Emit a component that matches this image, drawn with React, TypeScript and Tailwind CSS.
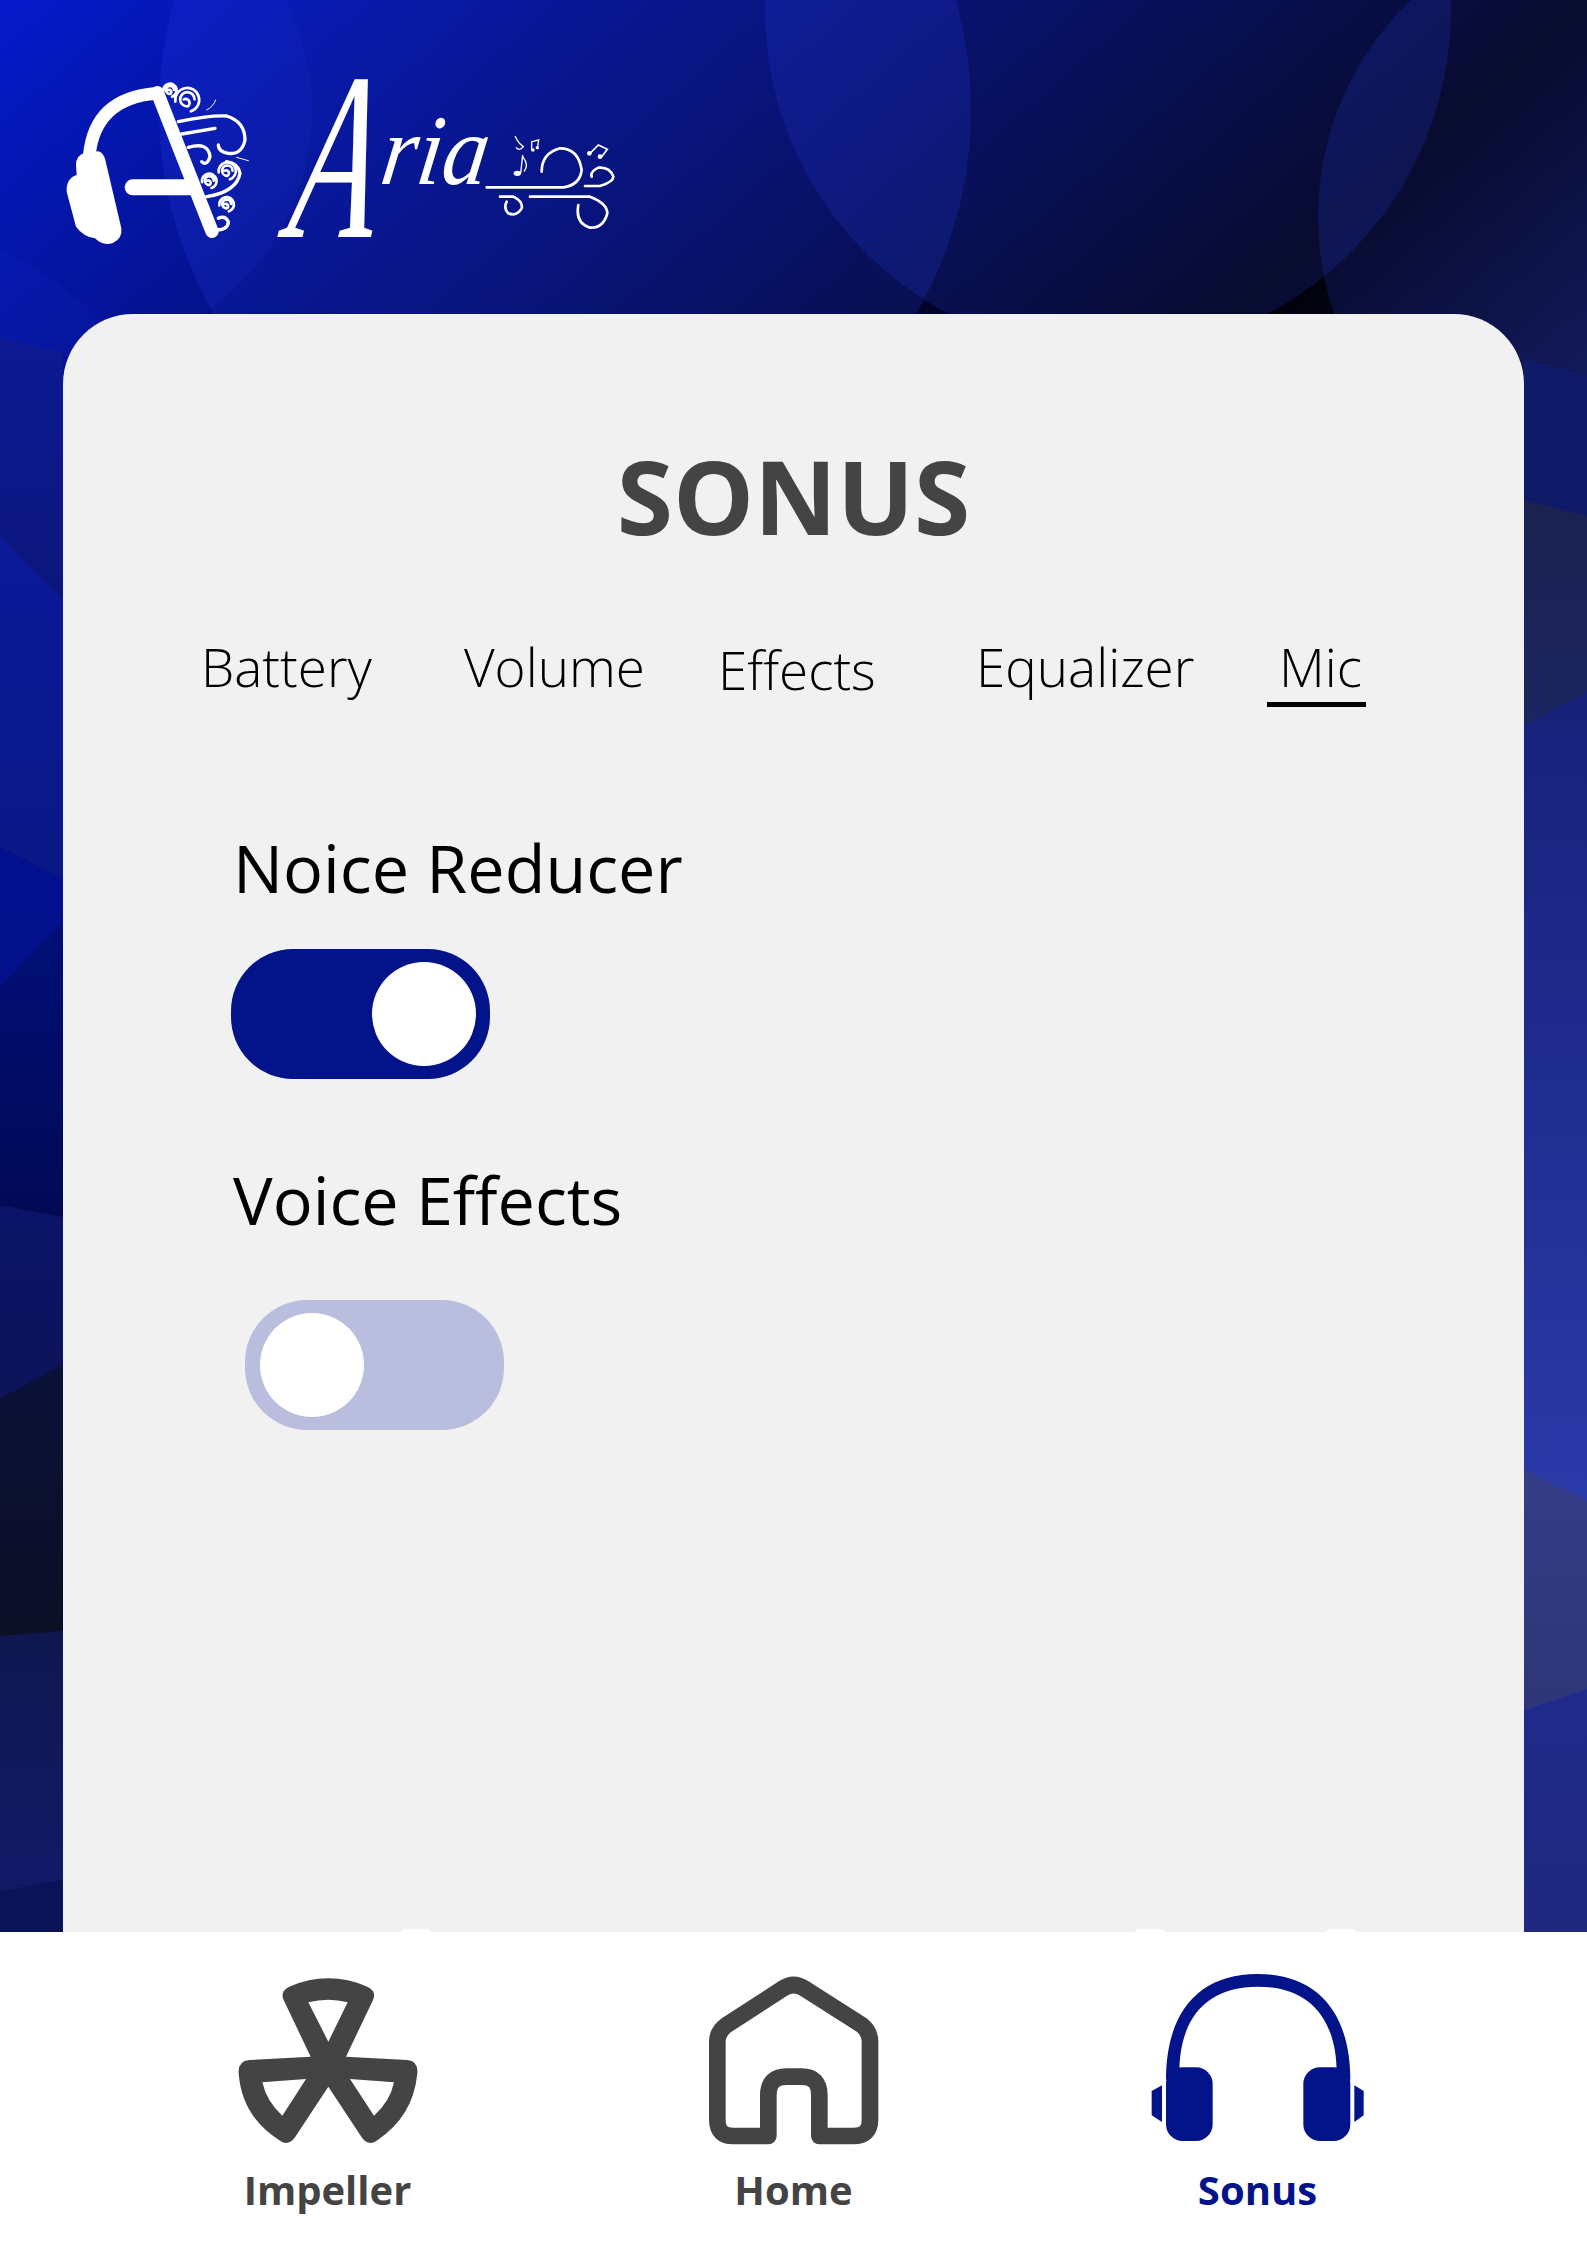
import React from "react";

const leftBands: [string, string, string][] = [
  ["0,337 63,352 63,600 0,537", "#0c1a94", "#0c177c"],
  ["0,537 63,600 63,879 0,847", "#0a1a9a", "#0a1886"],
  ["0,847 63,879 63,923 0,986", "#031190", "#03118c"],
  ["0,986 63,923 63,1217 0,1205", "#010f78", "#020a55"],
  ["0,1205 63,1217 63,1365 0,1399", "#0b1468", "#0c1358"],
  ["0,1399 63,1365 63,1631 0,1636", "#0b1238", "#0c0f26"],
  ["0,1636 63,1631 63,1880 0,1891", "#0f1750", "#121a68"],
  ["0,1891 63,1880 63,1940 0,1940", "#0a1258", "#0a1258"],
];
const rightBands: [string, string, string][] = [
  ["1524,358 1587,376 1587,516 1524,500", "#0f1a68", "#0f1a68"],
  ["1524,500 1587,516 1587,692 1524,726", "#1b2250", "#1b2560"],
  ["1524,726 1587,692 1587,1501 1524,1470", "#16217a", "#2a3aa8"],
  ["1524,1470 1587,1501 1587,1689 1524,1710", "#343d86", "#2e3678"],
  ["1524,1710 1587,1689 1587,1940 1524,1940", "#1f2c8c", "#20287e"],
];

function Background() {
  return (
    <svg className="absolute inset-0" width="1587" height="2245" viewBox="0 0 1587 2245">
      <defs>
        <linearGradient id="base" gradientUnits="userSpaceOnUse" x1="0" y1="0" x2="1386" y2="1575">
          <stop offset="0" stopColor="#0216c8" />
          <stop offset="0.5" stopColor="#000006" />
          <stop offset="0.96" stopColor="#2a3ab4" />
        </linearGradient>
        {[...leftBands, ...rightBands].map((b, i) => (
          <linearGradient key={i} id={`band${i}`} x1="0" y1="0" x2="0" y2="1">
            <stop offset="0" stopColor={b[1]} />
            <stop offset="1" stopColor={b[2]} />
          </linearGradient>
        ))}
      </defs>
      <rect width="1587" height="2245" fill="url(#base)" />
      <g fill="#3048ff" fillOpacity="0.17">
        <circle cx="1108" cy="10" r="343" />
        <circle cx="565" cy="110" r="406" />
        <circle cx="1618" cy="217" r="300" />
      </g>
      <circle cx="66" cy="110" r="246" fill="#3048ff" fillOpacity="0.08" />
      <circle cx="-140" cy="560" r="340" fill="#3048ff" fillOpacity="0.07" />
      {[...leftBands, ...rightBands].map((b, i) => (
        <polygon key={i} points={b[0]} fill={`url(#band${i})`} />
      ))}
    </svg>
  );
}

function Spiral({ x, y, r }: { x: number; y: number; r: number }) {
  return (
    <path
      d={`M ${x - r} ${y + r * 0.2} A ${r} ${r} 0 1 1 ${x + r * 0.3} ${y + r} M ${x + r * 0.6} ${y} A ${r * 0.6} ${r * 0.6} 0 1 0 ${x} ${y + r * 0.6} A ${r * 0.3} ${r * 0.3} 0 1 0 ${x - r * 0.3} ${y}`}
    />
  );
}

function LogoMark() {
  return (
    <svg width="220" height="200" viewBox="0 0 660 600" className="shrink-0">
      <g fill="none" stroke="#fff" strokeLinecap="round">
        <path d="M 118 285 Q 135 115 318 100" strokeWidth="38" strokeLinecap="butt" />
        <path d="M 322 98 L 486 514" strokeWidth="40" />
        <path d="M 248 382 L 425 382" strokeWidth="48" />
        <g strokeWidth="10">
          <path d="M 385 185 Q 480 165 530 168 Q 585 185 585 240 Q 575 285 535 280 Q 505 275 505 255" />
          <path d="M 395 222 L 495 205" />
          <path d="M 415 262 Q 475 245 480 290 Q 470 320 455 305" />
          <path d="M 470 410 Q 560 395 570 340 Q 565 310 530 305" />
          <path d="M 495 510 Q 535 510 535 485 Q 525 465 505 475" />
          <g strokeWidth="8">
            <Spiral x={412} y={118} r={36} />
            <Spiral x={360} y={90} r={20} />
            <Spiral x={532} y={332} r={26} />
            <Spiral x={478} y={362} r={22} />
            <Spiral x={530} y={432} r={22} />
          </g>
        </g>
        <path d="M 470 150 Q 490 140 497 120" strokeWidth="3" />
        <path d="M 560 292 L 595 302" strokeWidth="3" />
      </g>
      <path
        fill="#fff"
        d="M 78 315 Q 78 285 105 278 L 145 274 Q 160 278 166 300 L 214 505 Q 218 535 190 548 Q 160 560 135 535 Q 100 530 78 500 L 50 395 Q 48 355 80 345 Z"
      />
    </svg>
  );
}

function Wordmark() {
  const ink = { fill: "none", stroke: "#fff", strokeWidth: 8, strokeLinecap: "round" as const };
  return (
    <svg width="360" height="200" viewBox="0 0 1080 600" className="shrink-0 overflow-visible">
      <text
        fill="#fff"
        fontFamily="'Liberation Serif', serif"
        fontStyle="italic"
        transform="translate(45 530) skewX(-8) scale(0.66 1.12)"
        fontSize="640"
      >
        A
      </text>
      <text
        fill="#fff"
        fontFamily="'Liberation Serif', serif"
        fontStyle="italic"
        fontSize="300"
        transform="translate(325 372) skewX(-8)"
        textLength="320"
        lengthAdjust="spacingAndGlyphs"
      >
        ria
      </text>
      <path
        {...ink}
        d="M 650 382 L 880 382 Q 930 375 935 330 Q 925 265 870 265 Q 815 280 815 335 M 690 410 L 730 410 Q 760 425 755 445 Q 740 470 715 460 Q 700 445 710 425 M 780 410 L 960 410 Q 1012 430 1012 460 Q 1000 505 960 503 Q 915 490 925 435 M 945 378 L 990 378 Q 1030 365 1030 350 Q 1020 320 985 323 Q 960 335 965 350"
      />
      <g fill="none" stroke="#fff" strokeWidth="4">
        <path d="M 735 228 Q 745 250 760 260 Q 748 275 738 262 M 758 290 Q 778 315 762 335" />
      </g>
      <ellipse cx="742" cy="340" rx="11" ry="8" fill="#fff" />
      <path d="M 752 340 L 758 285" stroke="#fff" strokeWidth="4" />
      <path d="M 785 272 L 785 245 L 806 240 L 802 265" fill="none" stroke="#fff" strokeWidth="4" />
      <circle cx="789" cy="270" r="5" fill="#fff" />
      <circle cx="802" cy="263" r="5" fill="#fff" />
      <path d="M 960 280 L 985 255 L 1012 268 L 995 290" fill="none" stroke="#fff" strokeWidth="5" />
      <circle cx="958" cy="280" r="7" fill="#fff" />
      <circle cx="990" cy="290" r="7" fill="#fff" />
    </svg>
  );
}

function Impeller() {
  return (
    <svg width="220" height="200" viewBox="0 0 660 600" className="ml-[2px]">
      <path
        fill="#444444"
        fillRule="evenodd"
        d="M 272 290 L 192 122 Q 178 95 208 80 Q 325 30 442 80 Q 472 95 458 122 L 378 290 L 562 300 Q 595 303 592 340 Q 580 470 470 542 Q 445 560 425 532 L 325 380 L 225 532 Q 205 560 180 542 Q 65 470 56 340 Q 53 303 88 300 Z M 265 127 Q 325 112 383 127 L 325 245 Z M 127 367 L 258 357 L 187 467 Q 140 425 127 367 Z M 390 357 L 522 367 Q 510 425 462 467 Z"
      />
    </svg>
  );
}

function HomeIcon() {
  return (
    <svg width="210" height="200" viewBox="0 0 630 600" className="ml-[2px]">
      <path
        fill="none"
        stroke="#444444"
        strokeWidth="50"
        strokeLinejoin="round"
        d="M 235 528 L 130 528 Q 82 528 82 480 L 82 245 Q 82 215 110 195 L 280 85 Q 311 65 342 85 L 515 195 Q 540 215 540 245 L 540 480 Q 540 528 490 528 L 388 528 L 388 405 Q 388 350 335 350 L 290 350 Q 235 350 235 405 Z"
      />
    </svg>
  );
}

function Headphones() {
  return (
    <svg width="235" height="200" viewBox="0 0 705 600" fill="#03138a">
      <path d="M 75 360 C 75 160 170 42 350 42 C 530 42 628 160 628 360 L 587 340 C 587 170 500 80 350 80 C 200 80 115 170 115 340 Z" />
      <rect x="75" y="322" width="140" height="221" rx="50" />
      <rect x="487" y="322" width="141" height="221" rx="50" />
      <polygon points="32,393 63,376 63,486 32,466" />
      <polygon points="640,376 668,393 668,466 640,486" />
    </svg>
  );
}

function Toggle({ on, className }: { on: boolean; className: string }) {
  return (
    <div
      className={`flex h-[130px] w-[259px] items-center rounded-[62px] ${
        on ? "justify-end bg-[#03138a] pr-[14px]" : "justify-start bg-[#babede] pl-[15px]"
      } ${className}`}
    >
      <div className="h-[104px] w-[104px] rounded-full bg-white" />
    </div>
  );
}

export default function App() {
  const font = { fontFamily: "'Open Sans', sans-serif" };
  const tabs = [
    { t: "Battery", w: "w-[263px]", x: "" },
    { t: "Volume", w: "w-[254px]", x: "" },
    { t: "Effects", w: "w-[258px]", x: "mt-[3px]" },
    { t: "Equalizer", w: "w-[291px]", x: "" },
  ];
  return (
    <div className="relative flex h-[2245px] w-[1587px] flex-col overflow-hidden" style={font}>
      <Background />
      <header className="relative flex h-[314px] shrink-0 items-start pt-[60px] pl-[50px]">
        <LogoMark />
        <Wordmark />
      </header>
      <main className="relative mx-[63px] h-[1618px] shrink-0 rounded-t-[70px] bg-[#f1f1f1] pt-[132px]">
        <h1 className="text-center text-[102px] leading-[100px] font-bold text-[#444444]">SONUS</h1>
        <nav className="mt-[86px] flex items-start pl-[138px] text-[53px] leading-[70px] font-light text-black">
          {tabs.map((t) => (
            <div key={t.t} className={`${t.w} ${t.x} shrink-0`}>
              {t.t}
            </div>
          ))}
          <div className="shrink-0 border-b-[5px] border-black pr-[4px] pl-[12px]">Mic</div>
        </nav>
        <div className="mt-[115px] ml-[170px] text-[66.5px] leading-[90px] text-black">Noice Reducer</div>
        <Toggle on className="mt-[37px] ml-[168px]" />
        <div className="mt-[75px] ml-[170px] text-[66.5px] leading-[90px] text-black">Voice Effects</div>
        <Toggle on={false} className="mt-[56px] ml-[182px]" />
      </main>
      <footer className="relative flex h-[313px] shrink-0 justify-center bg-white pt-[28px] text-[40px] leading-[54px] font-bold">
        <span className="absolute -top-[3px] left-[401px] h-[8px] w-[30px] rounded-full bg-white" />
        <span className="absolute -top-[3px] left-[1135px] h-[8px] w-[30px] rounded-full bg-white" />
        <span className="absolute -top-[3px] left-[1326px] h-[8px] w-[30px] rounded-full bg-white" />
        <div className="flex w-[465px] flex-col items-center text-[#444444]">
          <Impeller />
          <span className="mt-[3px] -ml-[2px]">Impeller</span>
        </div>
        <div className="flex w-[465px] flex-col items-center text-[#444444]">
          <HomeIcon />
          <span className="mt-[3px]">Home</span>
        </div>
        <div className="flex w-[465px] flex-col items-center text-[#03138a]">
          <Headphones />
          <span className="mt-[3px] -ml-[2px]">Sonus</span>
        </div>
      </footer>
    </div>
  );
}
